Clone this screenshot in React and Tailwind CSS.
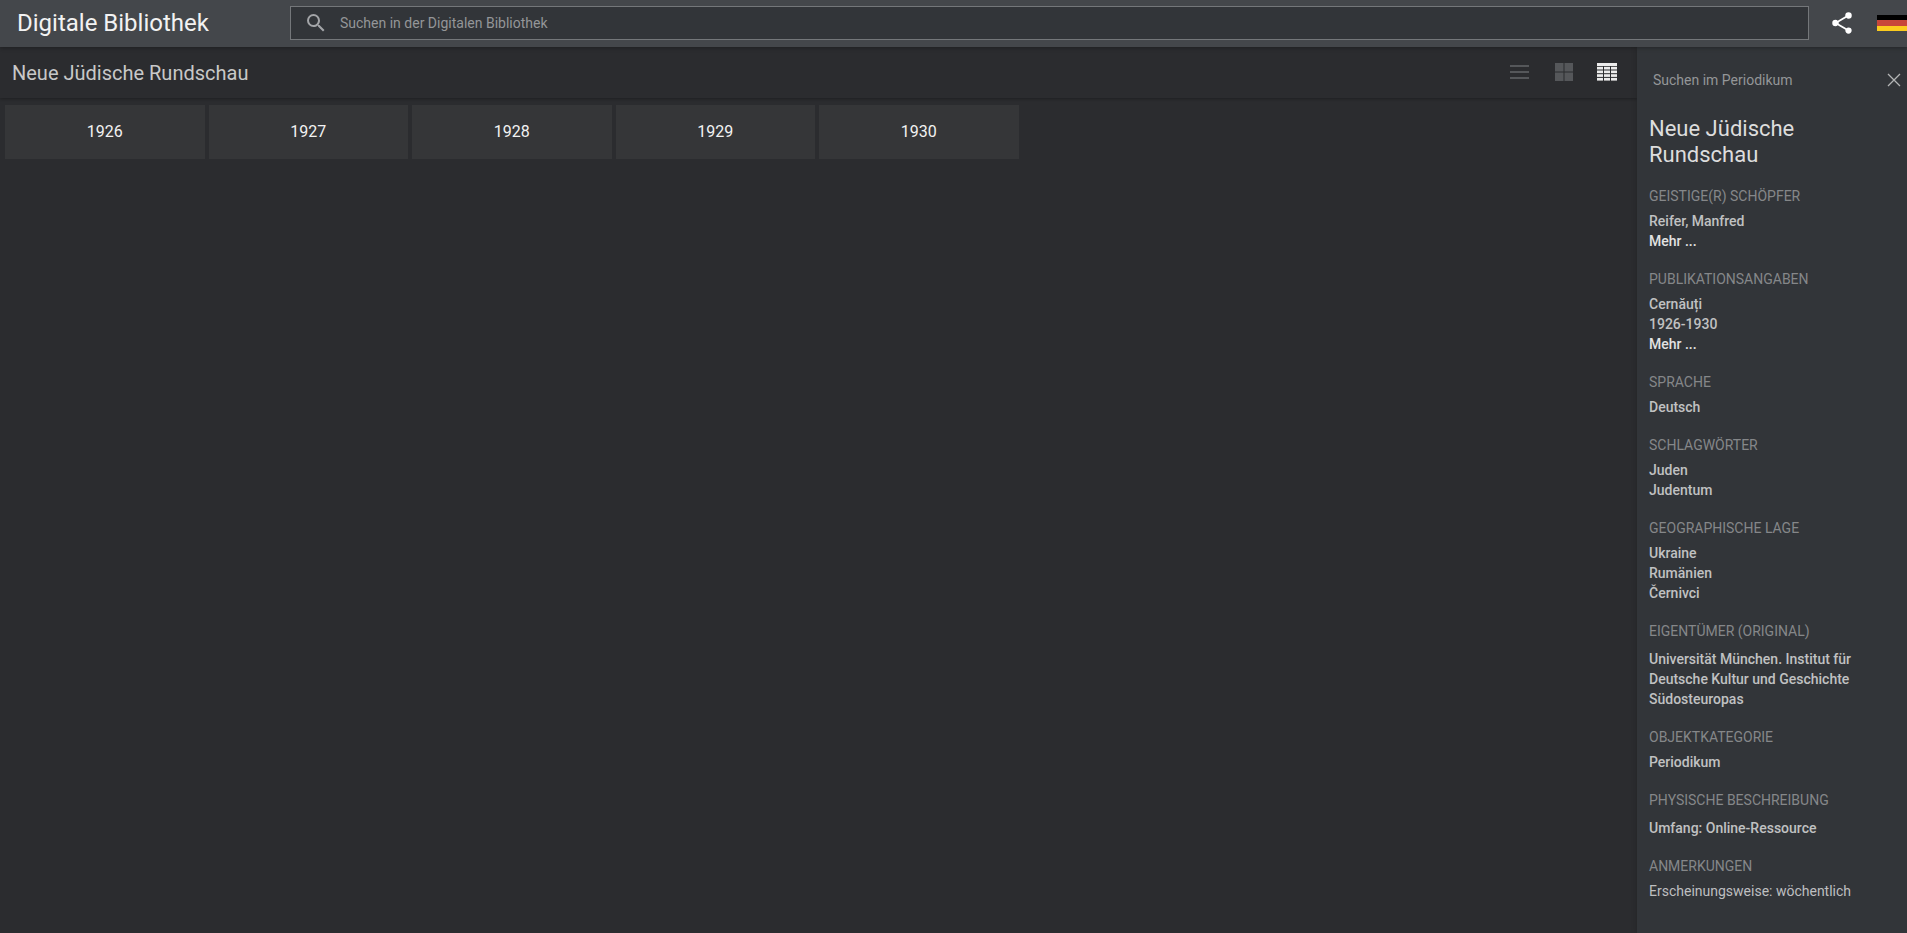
import { useState } from "react";

const YEARS = ["1926", "1927", "1928", "1929", "1930"];

const METADATA = [
  { label: "Geistige(r) Schöpfer", values: ["Reifer, Manfred"], more: true },
  { label: "Publikationsangaben", values: ["Cernăuți", "1926-1930"], more: true },
  { label: "Sprache", values: ["Deutsch"] },
  { label: "Schlagwörter", values: ["Juden", "Judentum"] },
  { label: "Geographische Lage", values: ["Ukraine", "Rumänien", "Černivci"] },
  { label: "Eigentümer (Original)", values: ["Universität München. Institut für Deutsche Kultur und Geschichte Südosteuropas"], spaced: true },
  { label: "Objektkategorie", values: ["Periodikum"] },
  { label: "Physische Beschreibung", values: ["Umfang: Online-Ressource"], spaced: true },
  { label: "Anmerkungen", values: ["Erscheinungsweise: wöchentlich"], plain: true },
];

function SearchIcon() {
  return (
    <svg viewBox="0 0 24 24" className="h-6 w-6 shrink-0 fill-[#a3a5a8]" aria-hidden="true">
      <path d="M9.5,3A6.5,6.5 0 0,1 16,9.5C16,11.11 15.41,12.59 14.44,13.73L14.71,14H15.5L20.5,19L19,20.5L14,15.5V14.71L13.73,14.44C12.59,15.41 11.11,16 9.5,16A6.5,6.5 0 0,1 3,9.5A6.5,6.5 0 0,1 9.5,3M9.5,5C7,5 5,7 5,9.5C5,12 7,14 9.5,14C12,14 14,12 14,9.5C14,7 12,5 9.5,5Z" />
    </svg>
  );
}

function ShareIcon() {
  return (
    <svg viewBox="0 0 24 24" className="h-[26px] w-[26px] fill-white" aria-hidden="true">
      <path d="M18,16.08C17.24,16.08 16.56,16.38 16.04,16.85L8.91,12.7C8.96,12.47 9,12.24 9,12C9,11.76 8.96,11.53 8.91,11.3L15.96,7.19C16.5,7.69 17.21,8 18,8A3,3 0 0,0 21,5A3,3 0 0,0 18,2A3,3 0 0,0 15,5C15,5.24 15.04,5.47 15.09,5.7L8.04,9.81C7.5,9.31 6.79,9 6,9A3,3 0 0,0 3,12A3,3 0 0,0 6,15C6.79,15 7.5,14.69 8.04,14.19L15.16,18.34C15.11,18.55 15.08,18.77 15.08,19C15.08,20.61 16.39,21.91 18,21.91C19.61,21.91 20.92,20.61 20.92,19A2.92,2.92 0 0,0 18,16.08Z" />
    </svg>
  );
}

function GermanFlag() {
  return (
    <svg viewBox="0 0 30 16" className="h-4 w-[30px]" aria-hidden="true">
      <rect width="30" height="16" fill="#000" />
      <rect y="5" width="30" height="6" fill="#c8463a" />
      <rect y="11" width="30" height="5" fill="#fbcb1e" />
    </svg>
  );
}

function ListIcon() {
  return (
    <svg viewBox="0 0 20 20" className="h-5 w-5 fill-current" aria-hidden="true">
      <rect x="1" y="3" width="19" height="2" />
      <rect x="1" y="9" width="19" height="2" />
      <rect x="1" y="15" width="19" height="2" />
    </svg>
  );
}

function TilesIcon() {
  return (
    <svg viewBox="0 0 20 20" className="h-5 w-5 fill-current" aria-hidden="true">
      <rect x="2" y="1" width="8.5" height="8.5" />
      <rect x="11.5" y="1" width="8.5" height="8.5" />
      <rect x="2" y="10.5" width="8.5" height="8.5" />
      <rect x="11.5" y="10.5" width="8.5" height="8.5" />
    </svg>
  );
}

function CalendarIcon() {
  return (
    <svg viewBox="0 0 20 20" className="h-5 w-5 fill-current" aria-hidden="true">
      <rect y="1" width="20" height="3" />
      {[4.8, 8.5, 12.2, 15.9].map((y) => (
        <g key={y}>
          <rect x="0" y={y} width="6" height="2.7" />
          <rect x="7" y={y} width="6" height="2.7" />
          <rect x="14" y={y} width="6" height="2.7" />
        </g>
      ))}
    </svg>
  );
}

const VIEWS = [
  { id: "list", title: "Liste", Icon: ListIcon },
  { id: "tiles", title: "Kacheln", Icon: TilesIcon },
  { id: "calendar", title: "Kalender", Icon: CalendarIcon },
];

function Header() {
  return (
    <header className="relative z-20 flex h-[47px] shrink-0 items-center bg-[#44474b] pb-px shadow-[0_1px_4px_rgba(0,0,0,0.3)]">
      <h1 className="w-[290px] shrink-0 pl-[17px] text-2xl text-[#f2f2f2]">Digitale Bibliothek</h1>
      <label className="flex h-[34px] grow items-center border border-[#74777a] bg-[#323539] pl-[13px]">
        <SearchIcon />
        <input
          type="text"
          aria-label="Suchen in der Digitalen Bibliothek"
          placeholder="Suchen in der Digitalen Bibliothek"
          className="ml-3 grow bg-transparent text-sm text-white outline-none placeholder:text-[#949698]"
        />
      </label>
      <div className="flex shrink-0 items-center gap-[22px] pl-5">
        <button type="button" aria-label="Teilen">
          <ShareIcon />
        </button>
        <button type="button" aria-label="Sprache: Deutsch">
          <GermanFlag />
        </button>
      </div>
    </header>
  );
}

function Sidebar() {
  return (
    <aside className="relative z-10 w-[270px] shrink-0 bg-[#323539] pt-4 pl-3 shadow-[0_0_6px_rgba(0,0,0,0.2)]">
      <div className="flex h-[34px] items-center justify-between pr-[5px] pl-1">
        <input
          type="text"
          aria-label="Suchen im Periodikum"
          placeholder="Suchen im Periodikum"
          className="w-[200px] bg-transparent text-sm text-white outline-none placeholder:text-[#949698]"
        />
        <button type="button" aria-label="Schließen">
          <svg viewBox="0 0 16 16" className="h-4 w-4 stroke-[#b4b5b6] stroke-[1.3]" aria-hidden="true">
            <path d="M2 2L14 14M14 2L2 14" />
          </svg>
        </button>
      </div>
      <h2 className="mt-[19px] w-[200px] text-[22px] leading-[26px] text-[#dddddd]">Neue Jüdische Rundschau</h2>
      <dl className="mt-[18px] flex flex-col gap-[18px] text-sm leading-5">
        {METADATA.map((m) => (
          <div key={m.label}>
            <dt className={`text-[#858789] uppercase ${m.spaced ? "mb-2" : "mb-[5px]"}`}>{m.label}</dt>
            {m.values.map((v) => (
              <dd key={v} className={m.plain ? "text-[#bebfc0]" : "w-[220px] font-medium text-[#c0c1c2]"}>
                {v}
              </dd>
            ))}
            {m.more && (
              <dd>
                <button type="button" className="block font-medium text-[#e2e2e2]">Mehr ...</button>
              </dd>
            )}
          </div>
        ))}
      </dl>
    </aside>
  );
}

export default function App() {
  const [view, setView] = useState("calendar");

  return (
    <div className="flex min-h-screen flex-col bg-[#2b2c2f] font-['Roboto',sans-serif]">
      <Header />
      <div className="flex grow">
        <main className="min-w-0 grow">
          <div className="flex h-[51px] items-center justify-between pr-5 pl-3 shadow-[0_1px_3px_rgba(0,0,0,0.3)]">
            <h2 className="text-xl text-[#c8c8c8]">Neue Jüdische Rundschau</h2>
            <div className="flex gap-6 pb-[2px]">
              {VIEWS.map(({ id, title, Icon }) => (
                <button
                  key={id}
                  type="button"
                  aria-label={title}
                  onClick={() => setView(id)}
                  className={view === id ? "text-[#ececec]" : "text-[#55575a]"}
                >
                  <Icon />
                </button>
              ))}
            </div>
          </div>
          <div className="grid grid-cols-8 gap-1 pt-[7px] pr-2 pl-[5px]">
            {YEARS.map((year) => (
              <a key={year} href={`#${year}`} className="flex h-[54px] items-center justify-center bg-[#353638] text-base text-[#f2f2f2]">
                {year}
              </a>
            ))}
          </div>
        </main>
        <Sidebar />
      </div>
    </div>
  );
}
